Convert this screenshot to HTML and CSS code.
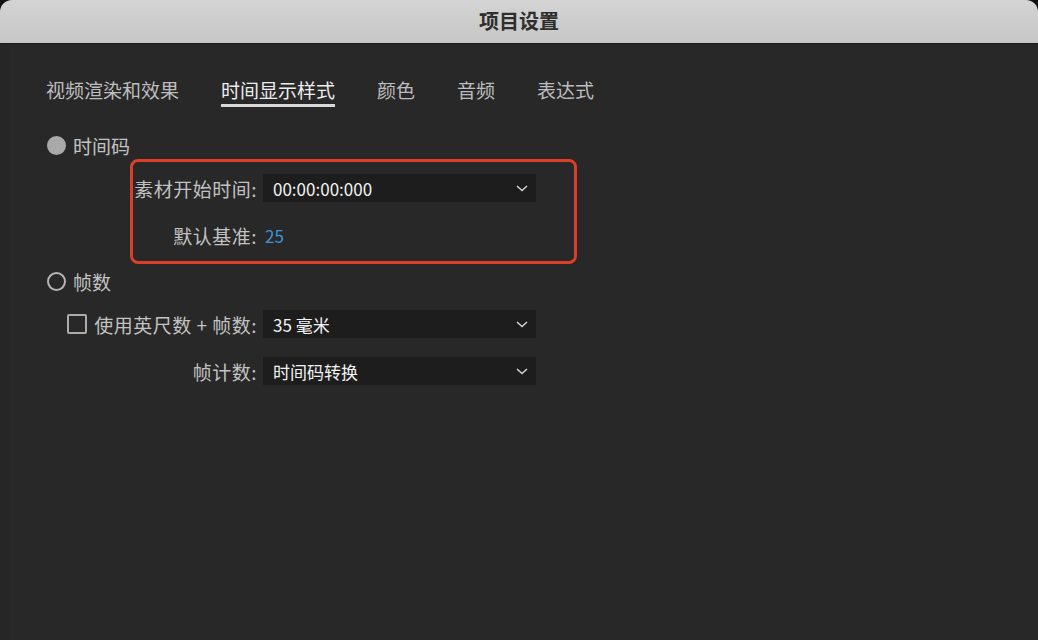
FILE: index.html
```html
<!DOCTYPE html>
<html lang="zh-CN">
<head>
<meta charset="utf-8">
<title>项目设置</title>
<link rel="stylesheet" href="styles.css">
</head>
<body>
<div class="window">
  <div class="titlebar">项目设置</div>
  <div class="content">
    <div class="tabs">
      <div class="tab">视频渲染和效果</div>
      <div class="tab active">时间显示样式</div>
      <div class="tab">颜色</div>
      <div class="tab">音频</div>
      <div class="tab">表达式</div>
    </div>

    <div class="radio-row first">
      <span class="radio checked"></span>
      <span class="radio-label">时间码</span>
    </div>

    <div class="highlight">
      <div class="hrow">
        <div class="hlabel">素材开始时间:</div>
        <div class="select">
          <span>00:00:00:000</span>
          <svg class="chev" width="12" height="7" viewBox="0 0 12 7"><path d="M1 1 L6 5.5 L11 1" fill="none" stroke="#d0d0d0" stroke-width="1.6"/></svg>
        </div>
      </div>
      <div class="hrow second">
        <div class="hlabel">默认基准:</div>
        <div class="value"><span class="hot">25</span></div>
      </div>
    </div>

    <div class="radio-row frames">
      <span class="radio"></span>
      <span class="radio-label">帧数</span>
    </div>

    <div class="frow check-row">
      <div class="flabel"><span class="checkbox"></span>使用英尺数 + 帧数:</div>
      <div class="select">
        <span>35 毫米</span>
        <svg class="chev" width="12" height="7" viewBox="0 0 12 7"><path d="M1 1 L6 5.5 L11 1" fill="none" stroke="#d0d0d0" stroke-width="1.6"/></svg>
      </div>
    </div>

    <div class="frow count-row">
      <div class="flabel">帧计数:</div>
      <div class="select">
        <span>时间码转换</span>
        <svg class="chev" width="12" height="7" viewBox="0 0 12 7"><path d="M1 1 L6 5.5 L11 1" fill="none" stroke="#d0d0d0" stroke-width="1.6"/></svg>
      </div>
    </div>
  </div>
</div>
</body>
</html>
```

FILE: styles.css
```css
html, body {
  margin: 0;
  padding: 0;
  background: #111;
  height: 100%;
}

body {
  font-family: "Noto Sans CJK SC", "Noto Sans", sans-serif;
}

.window {
  height: 640px;
  background: #282828;
  border-radius: 12px 12px 0 0;
  overflow: hidden;
  box-shadow: inset 9px 0 0 #262626;
}

.titlebar {
  height: 43px;
  border-bottom: 1px solid #1b1b1b;
  background: linear-gradient(#d4d4d4, #cbcbcb 60%, #c7c7c7);
  color: #2e2e2e;
  font-size: 20px;
  font-weight: 700;
  line-height: 41px;
  text-align: center;
}

.content {
  padding-left: 46px;
}

.tabs {
  display: flex;
  gap: 42px;
  padding-top: 33px;
}

.tab {
  font-size: 19px;
  line-height: 26px;
  color: #bdbdbd;
  padding-bottom: 1px;
  border-bottom: 3px solid transparent;
}

.tab.active {
  color: #ececec;
  border-bottom-color: #d9d9d9;
}

.radio-row {
  display: flex;
  align-items: center;
  height: 26px;
  font-size: 19px;
  color: #c2c2c2;
}

.radio-row.first {
  margin-top: 25px;
}

.radio-row.frames {
  margin-top: 4px;
}

.radio {
  width: 19px;
  height: 19px;
  border-radius: 50%;
  box-sizing: border-box;
  margin-left: 1px;
  margin-right: 7px;
  border: 2px solid #b4b4b4;
}

.radio.checked {
  background: #a9a9a9;
  border-color: #a9a9a9;
}

.highlight {
  margin-left: 84px;
  width: 447px;
  box-sizing: border-box;
  height: 105px;
  margin-top: 1px;
  border: 3px solid #dc3f28;
  border-radius: 8px;
  padding: 12px 0 0 0;
}

.hrow {
  display: flex;
  align-items: center;
  height: 28px;
}

.hrow.second {
  margin-top: 19px;
}

.hlabel {
  width: 124px;
  text-align: right;
  font-size: 19px;
  letter-spacing: 0.5px;
  color: #c2c2c2;
  white-space: nowrap;
  margin-right: 6px;
}

.select {
  width: 273px;
  height: 28px;
  box-sizing: border-box;
  background: #1d1d1d;
  display: flex;
  align-items: center;
  justify-content: space-between;
  padding: 0 8px 0 10px;
  color: #f2f2f2;
  font-size: 17px;
}

.value {
  width: 273px;
  height: 28px;
  display: flex;
  align-items: center;
  padding-left: 2px;
  box-sizing: border-box;
}

.hot {
  color: #3f93d6;
  font-size: 17px;
}

.chev {
  display: block;
  margin-top: 1px;
}

.frow {
  display: flex;
  align-items: center;
  height: 28px;
}

.frow.check-row {
  margin-top: 16px;
}

.frow.count-row {
  margin-top: 19px;
}

.flabel {
  width: 211px;
  margin-right: 6px;
  display: flex;
  align-items: center;
  justify-content: flex-end;
  font-size: 19px;
  letter-spacing: 0.5px;
  color: #c2c2c2;
  white-space: nowrap;
}

.checkbox {
  width: 20px;
  height: 20px;
  box-sizing: border-box;
  border: 2px solid #acacac;
  border-radius: 2px;
  margin-right: 7px;
}
```
